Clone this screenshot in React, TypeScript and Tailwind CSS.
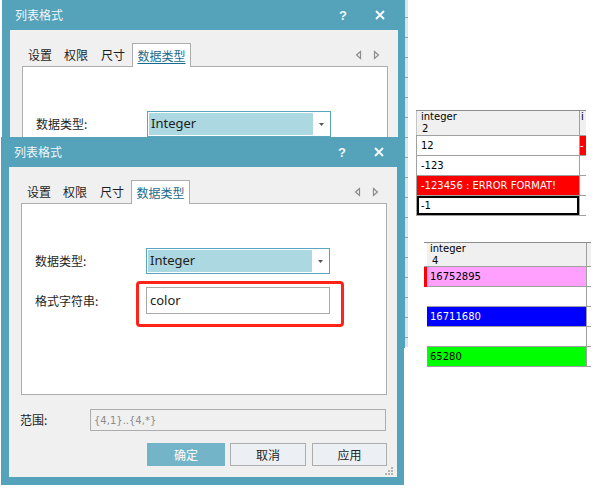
import React from 'react';

// --- shared font stacks ---
const cjk = "font-['Noto_Sans_CJK_SC',sans-serif]";
const latin = "font-['Noto_Sans','Noto_Sans_CJK_SC',sans-serif]";
const cellFont = "font-['DejaVu_Sans',sans-serif] text-[10px]";

// Small outlined arrows used by the tab strip scroller
const ArrowLeft = () => (
  <svg width="7" height="10" viewBox="0 0 7 10">
    <path d="M5.5 1.5 L1.5 5 L5.5 8.5 Z" fill="none" stroke="#8c8c8c" strokeWidth="1.2" />
  </svg>
);
const ArrowRight = () => (
  <svg width="7" height="10" viewBox="0 0 7 10">
    <path d="M1.5 1.5 L5.5 5 L1.5 8.5 Z" fill="none" stroke="#8c8c8c" strokeWidth="1.2" />
  </svg>
);

// Resize grip in the bottom right corner of the dialog
const Grip = () => (
  <svg width="8" height="8" viewBox="0 0 8 8" className="absolute right-[4px] bottom-[2px]">
    {[
      [6, 0],
      [3, 3], [6, 3],
      [0, 6], [3, 6], [6, 6],
    ].map(([x, y], i) => (
      <rect key={i} x={x} y={y} width="2" height="2" fill="#b4b4b4" />
    ))}
  </svg>
);

interface DialogProps {
  className: string;
  underline?: boolean;
  highlight?: boolean;
}

// --- 列表格式 dialog window ---
const Dialog: React.FC<DialogProps> = ({ className, underline, highlight }) => (
  <div className={`absolute w-[403px] h-[348px] bg-[#55a2bb] flex flex-col pl-[8px] pr-[7px] pb-[8px] ${className}`}>
    {/* Title bar */}
    <div className="h-[30px] flex items-center pl-[5px] text-[#f1f7f9] shrink-0">
      <span className={`${cjk} text-[12px] leading-none`}>列表格式</span>
      <span className="ml-auto mr-[28px] font-['Liberation_Sans',sans-serif] font-bold text-[13px] leading-none">?</span>
      <svg width="10" height="10" viewBox="0 0 10 10" className="mr-[13px]">
        <path d="M1 1 L9 9 M9 1 L1 9" stroke="#f4f9fb" strokeWidth="2" />
      </svg>
    </div>

    {/* Client area */}
    <div className={`relative flex-1 bg-[#f0f0f0] flex flex-col ${cjk} text-[12px] text-[#1e1e1e]`}>
      {/* Tabs */}
      <div className="mt-[13px] h-[23px] flex items-start pl-[18px] pr-[18px]">
        <span className="h-[23px] flex items-center">设置</span>
        <span className="h-[23px] flex items-center ml-[12px]">权限</span>
        <span className="h-[23px] flex items-center ml-[13px]">尺寸</span>
        <span
          className={`relative z-10 ml-[7px] h-[24px] w-[59px] flex items-center justify-center bg-white border border-b-0 border-[#adadad] text-[#1a6c8e] ${underline ? 'underline underline-offset-2' : ''}`}
        >
          数据类型
        </span>
        <div className="ml-auto h-[23px] flex items-center gap-[11px]">
          <ArrowLeft />
          <ArrowRight />
        </div>
      </div>

      {/* Tab panel */}
      <div className="relative ml-[12px] w-[366px] h-[192px] shrink-0 border border-[#adadad] bg-white pt-[44px] pl-[13px]">
        <div className="flex items-center h-[26px]">
          <span className="w-[111px]">数据类型:</span>
          <div className="w-[184px] h-[26px] border border-[#5aa5c0] p-[1px] flex">
            <div className={`w-[164px] bg-[#acd8e2] pl-[2px] flex items-center ${latin} text-[13px] text-[#202020]`}>Integer</div>
            <div className="flex-1 flex items-center justify-center">
              <svg width="5" height="3" viewBox="0 0 5 3">
                <path d="M0 0 L5 0 L2.5 3 Z" fill="#555" />
              </svg>
            </div>
          </div>
        </div>
        <div className="flex items-center h-[27px] mt-[13px]">
          <span className="w-[111px]">格式字符串:</span>
          <div className={`w-[184px] h-[27px] border border-[#a9a9a9] bg-white pl-[3px] flex items-center ${latin} text-[13px] text-[#202020]`}>
            color
          </div>
        </div>
        {/* Annotation box */}
        {highlight && (
          <div className="absolute left-[114px] top-[77px] w-[208px] h-[46px] border-[3px] border-[#ff2318] rounded-[4px]" />
        )}
      </div>

      {/* Range */}
      <div className="mt-[14px] pl-[11px] flex items-center h-[22px]">
        <span className="w-[70px]">范围:</span>
        <div className={`w-[296px] h-[22px] border border-[#adadad] bg-[#f0f0f0] pl-[3px] flex items-center ${cellFont} text-[#8a8a8a]`}>
          {'{4,1}..{4,*}'}
        </div>
      </div>

      {/* Buttons */}
      <div className="mt-[12px] flex justify-end pr-[10px]">
        <button className="w-[78px] h-[23px] bg-[#74b4c8] text-white">确定</button>
        <button className="ml-[5px] w-[76px] h-[23px] border border-[#adadad] bg-[#ecf0f4]">取消</button>
        <button className="ml-[6px] w-[75px] h-[23px] border border-[#adadad] bg-[#ecf0f4]">应用</button>
      </div>

      <Grip />
    </div>
  </div>
);

// --- Spreadsheet fragments on the right ---
const TableOne = () => (
  <div className={`mt-[110px] ml-[8px] w-[170px] border-t border-[#8c8c8c] ${cellFont} text-black`}>
    <div className="flex h-[25px] bg-[#f0f0f0] border-b border-[#a0a0a0]">
      <div className="w-[164px] border-l border-[#c4c4c4] border-r border-r-[#a0a0a0] pl-[4px] leading-[12px]">
        <div>integer</div>
        <div className="pl-[1px]">2</div>
      </div>
      <div className="flex-1 pl-[1px] leading-[12px]">
        <div>i</div>
      </div>
    </div>
    <div className="flex h-[20px] border-b border-[#a0a0a0]">
      <div className="w-[164px] border-l border-r border-[#a0a0a0] pl-[4px] flex items-center">12</div>
      <div className="flex-1 bg-[#ff0000] text-white flex items-center">-</div>
    </div>
    <div className="flex h-[20px] border-b border-[#a0a0a0]">
      <div className="w-[164px] border-l border-r border-[#a0a0a0] pl-[4px] flex items-center">-123</div>
      <div className="flex-1" />
    </div>
    <div className="flex h-[20px] border-b border-[#a0a0a0]">
      <div className="w-[164px] border-l border-r border-[#a0a0a0] bg-[#ff0000] text-white pl-[4px] flex items-center whitespace-nowrap">
        -123456 : ERROR FORMAT!
      </div>
      <div className="flex-1" />
    </div>
    <div className="flex h-[20px] border-b border-[#a0a0a0]">
      <div className="w-[164px] border-l border-[#a0a0a0] border-r border-r-[#a0a0a0] flex">
        <div className="flex-1 border-2 border-black pl-[2px] flex items-center">-1</div>
      </div>
      <div className="flex-1" />
    </div>
  </div>
);

const colorRows = [
  { value: '16752895', bg: 'bg-[#ffa0ff]', text: 'text-black', marker: true },
  { value: '', bg: 'bg-white', text: 'text-black', marker: false },
  { value: '16711680', bg: 'bg-[#0000ff]', text: 'text-white', marker: false },
  { value: '', bg: 'bg-white', text: 'text-black', marker: false },
  { value: '65280', bg: 'bg-[#00ff00]', text: 'text-black', marker: false },
];

const TableTwo = () => (
  <div className={`mt-[26px] ml-[16px] w-[167px] border-t border-[#8c8c8c] ${cellFont} text-black`}>
    <div className="flex h-[24px] border-b border-[#a0a0a0]">
      <div className="w-[3px] bg-white" />
      <div className="w-[160px] bg-[#f0f0f0] border-r border-[#a0a0a0] pl-[3px] leading-[12px]">
        <div>integer</div>
        <div className="pl-[2px]">4</div>
      </div>
      <div className="flex-1 bg-[#f0f0f0]" />
    </div>
    {colorRows.map((row, i) => (
      <div key={i} className="flex h-[20px]">
        <div className={`w-[3px] ${row.marker ? 'bg-[#ff0000]' : 'bg-white'}`} />
        <div className={`w-[160px] border-b border-r border-[#a0a0a0] ${row.bg} ${row.text} pl-[3px] flex items-center`}>
          {row.value}
        </div>
        <div className="flex-1 border-b border-[#a0a0a0]" />
      </div>
    ))}
  </div>
);

// Row ticks of the spreadsheet peeking out from behind the dialogs
const Ticks = () => (
  <div className="w-[3px] h-[347px] bg-[#dbe6eb] flex flex-col">
    <div className="h-[18px] border-b border-[#9a9a9a]" />
    {Array.from({ length: 16 }).map((_, i) => (
      <div key={i} className="h-[20px] border-b border-[#9a9a9a]" />
    ))}
  </div>
);

export default function App() {
  return (
    <div className="w-[593px] h-[493px] bg-white flex overflow-hidden">
      {/* Desktop area holding the two overlapping dialog windows */}
      <div className="relative w-[405px] h-[493px] shrink-0">
        <Dialog className="left-[2px] top-0" underline />
        <Dialog className="left-[1px] top-[137px]" highlight />
      </div>
      <Ticks />
      <div className="flex-1 flex flex-col">
        <TableOne />
        <TableTwo />
      </div>
    </div>
  );
}
